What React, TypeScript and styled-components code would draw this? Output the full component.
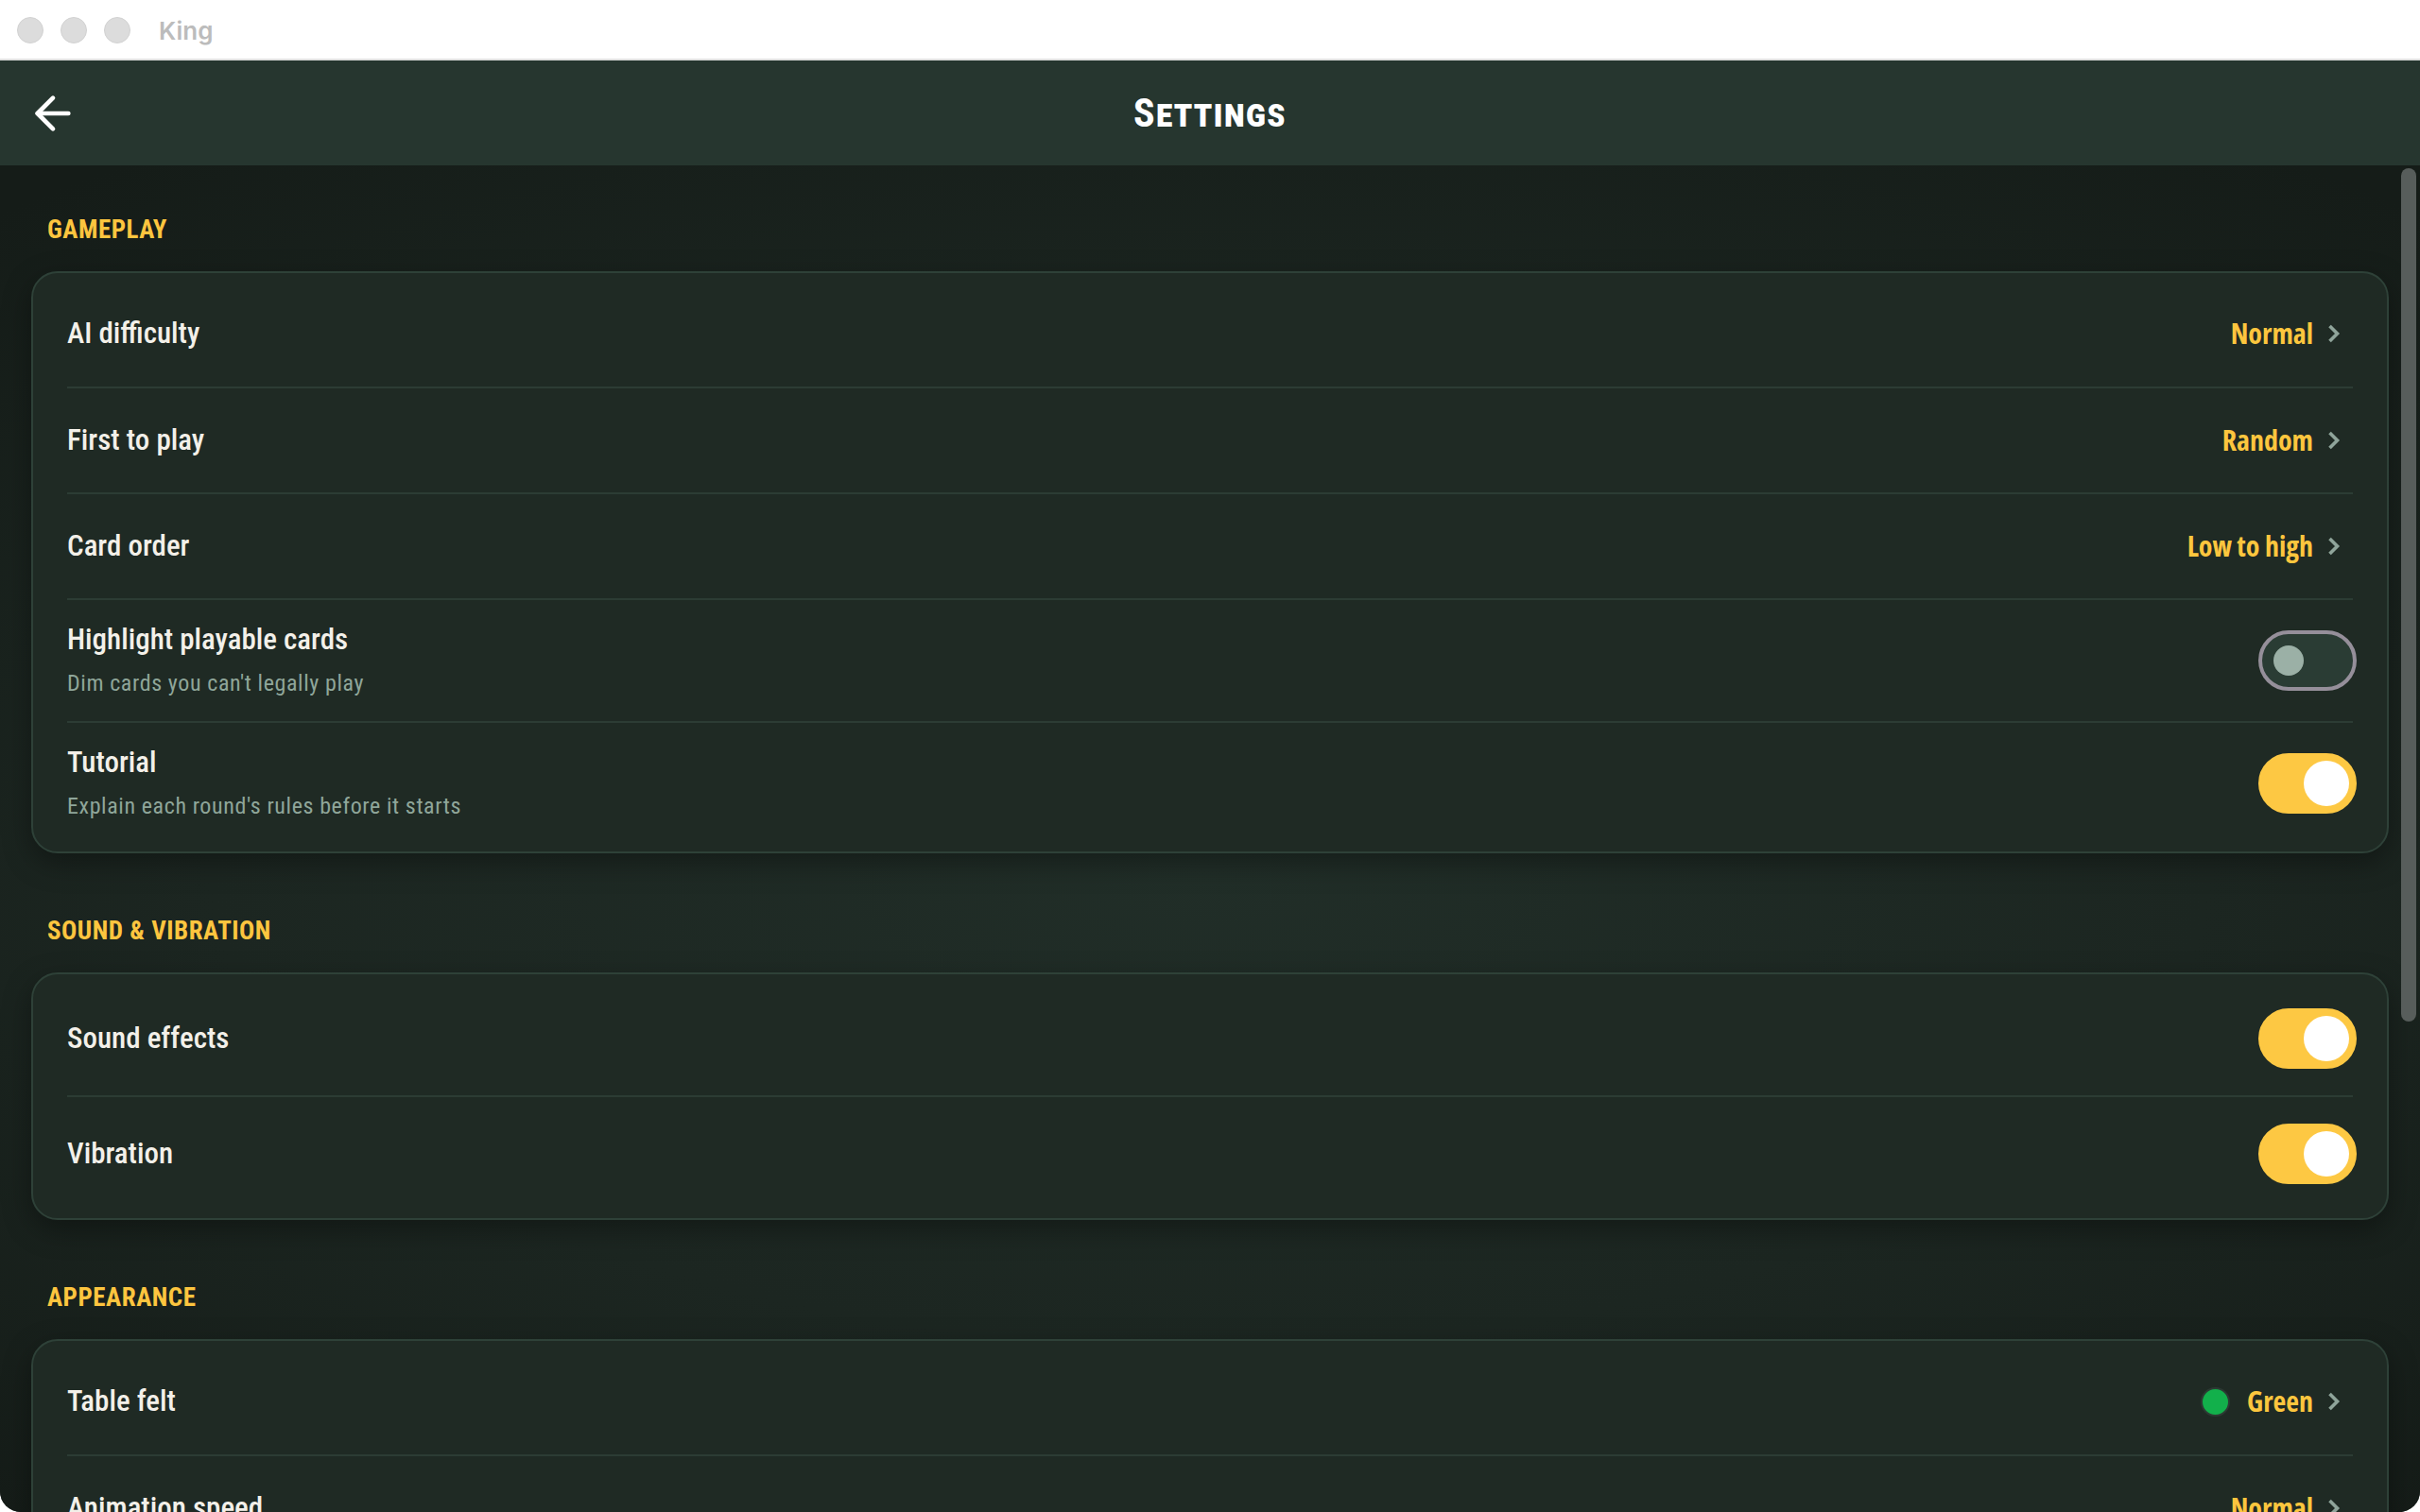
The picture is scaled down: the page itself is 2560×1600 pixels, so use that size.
import React, { useEffect, useRef, useState } from "react";
import styled, { createGlobalStyle } from "styled-components";

const FONT = `"Roboto Condensed", "DejaVu Sans Condensed", sans-serif`;
const VALUE_FONT = `"Open Sans", "Roboto Condensed", sans-serif`;

const GlobalStyle = createGlobalStyle`
  html, body {
    margin: 0;
    height: 100%;
    background: #ffffff;
  }
  #root {
    height: 100%;
  }
  * {
    box-sizing: border-box;
  }
`;

const Window = styled.div`
  height: 100vh;
  display: flex;
  flex-direction: column;
  overflow: hidden;
  border-radius: 0 0 22px 22px;
  background: #161d19;
`;

const TitleBar = styled.div`
  height: 64px;
  flex-shrink: 0;
  display: flex;
  align-items: center;
  gap: 18px;
  padding: 2px 0 0 18px;
  background: #ffffff;
  border-bottom: 2px solid #e0e0e0;
`;

const Light = styled.span`
  width: 28px;
  height: 28px;
  border-radius: 50%;
  background: #dcdcdc;
  border: 1px solid #d2d2d2;
`;

const WindowName = styled.span`
  margin-left: 12px;
  font: 600 26px "Inter", "Liberation Sans", sans-serif;
  color: #bcbcbc;
`;

const Header = styled.header`
  height: 111px;
  flex-shrink: 0;
  display: grid;
  grid-template-columns: 1fr auto 1fr;
  align-items: center;
  padding: 0 28px;
  background: #26362f;
`;

const BackButton = styled.button`
  width: 56px;
  height: 56px;
  padding: 0;
  border: none;
  background: none;
  color: #ffffff;
  display: flex;
  cursor: pointer;
`;

const Title = styled.h1`
  margin: 0;
  font: 700 42px ${FONT};
  font-variant: small-caps;
  letter-spacing: 1px;
  color: #ffffff;
`;

const ScrollFrame = styled.div`
  position: relative;
  flex: 1;
  min-height: 0;
`;

const Scroll = styled.main`
  height: 100%;
  overflow-y: auto;
  scrollbar-width: none;
  background: radial-gradient(
    ellipse 75% 65% at 50% 52%,
    #212e28 0%,
    #1c2621 55%,
    #151c18 100%
  );

  &::-webkit-scrollbar {
    display: none;
  }
`;

const Thumb = styled.div`
  position: absolute;
  right: 4px;
  width: 16px;
  border-radius: 8px;
  background: #575d5b;
  pointer-events: none;
`;

const Content = styled.div`
  padding: 52px 33px 160px 33px;
`;

const Section = styled.section`
  & + & {
    margin-top: 66px;
  }
`;

const SectionLabel = styled.h2`
  margin: 0 0 28px;
  padding-left: 17px;
  font: 700 27px/32px ${FONT};
  letter-spacing: 0.5px;
  color: #fdc53f;
`;

const Card = styled.div`
  background: #1f2a24;
  border: 2px solid #2e4138;
  border-radius: 28px;
  padding: 8px 36px;
  box-shadow: 0 10px 30px rgba(0, 0, 0, 0.35);
`;

const Row = styled.div`
  min-height: 112px;
  padding: 24px 0;
  display: flex;
  align-items: center;
  justify-content: space-between;
  gap: 24px;

  & + & {
    border-top: 2px solid #2c3c34;
  }
`;

const Texts = styled.div`
  display: flex;
  flex-direction: column;
  gap: 12px;
`;

const RowTitle = styled.div`
  font: 500 31px/36px ${FONT};
  color: #f3f0e9;
`;

const RowHint = styled.div`
  font: 400 24px/32px ${FONT};
  letter-spacing: 0.6px;
  color: #8fa69a;
`;

const ValueButton = styled.button`
  display: flex;
  align-items: center;
  gap: 15px;
  margin-right: 13px;
  padding: 0;
  border: none;
  background: none;
  cursor: pointer;
`;

const Value = styled.span`
  font: 700 30px/56px ${VALUE_FONT};
  font-stretch: 75%;
  color: #fcc63e;
`;

const FeltDot = styled.span<{ $color: string }>`
  width: 31px;
  height: 31px;
  margin-right: 3px;
  border-radius: 50%;
  background: ${(p) => p.$color};
  border: 2px solid #2c3a33;
`;

const Track = styled.button<{ $on: boolean }>`
  width: 104px;
  height: 64px;
  margin: 4px -4px 4px 0;
  flex-shrink: 0;
  display: flex;
  align-items: center;
  justify-content: ${(p) => (p.$on ? "flex-end" : "flex-start")};
  padding: 0 4px 0 12px;
  border-radius: 32px;
  border: 4px solid ${(p) => (p.$on ? "#fdc843" : "#958f9a")};
  background: ${(p) => (p.$on ? "#fdc843" : "#2a3c34")};
  cursor: pointer;
`;

const Knob = styled.span<{ $on: boolean }>`
  width: ${(p) => (p.$on ? 48 : 32)}px;
  height: ${(p) => (p.$on ? 48 : 32)}px;
  border-radius: 50%;
  background: ${(p) => (p.$on ? "#ffffff" : "#9bb0a6")};
`;

const Chevron = () => (
  <svg width="14" height="22" viewBox="0 0 14 22" fill="none">
    <path d="M2.5 3 L10.5 11 L2.5 19" stroke="#8fa49a" strokeWidth="3.6" />
  </svg>
);

const ArrowLeft = () => (
  <svg width="56" height="56" viewBox="0 0 24 24" fill="none" stroke="currentColor" strokeWidth="2" strokeLinecap="round" strokeLinejoin="round">
    <path d="m12 19-7-7 7-7" />
    <path d="M19 12H5" />
  </svg>
);

const Switch = ({ on, onToggle }: { on: boolean; onToggle: () => void }) => (
  <Track $on={on} onClick={onToggle} role="switch" aria-checked={on}>
    <Knob $on={on} />
  </Track>
);

const PickRow = ({ label, value, dot }: { label: string; value: string; dot?: string }) => (
  <Row>
    <RowTitle>{label}</RowTitle>
    <ValueButton>
      {dot && <FeltDot $color={dot} />}
      <Value>{value}</Value>
      <Chevron />
    </ValueButton>
  </Row>
);

const App: React.FC = () => {
  const [toggles, setToggles] = useState({
    highlight: false,
    tutorial: true,
    sound: true,
    vibration: true,
  });
  const scrollRef = useRef<HTMLElement>(null);
  const [thumb, setThumb] = useState({ top: 3, height: 0 });

  // the native bar is hidden, so the thumb follows the scroll position by hand
  const measure = () => {
    const el = scrollRef.current;
    if (!el) return;
    const track = el.clientHeight - 6;
    const height = (track * el.clientHeight) / el.scrollHeight;
    const top = 3 + (track - height) * (el.scrollTop / Math.max(1, el.scrollHeight - el.clientHeight));
    setThumb({ top, height });
  };

  useEffect(() => {
    measure();
    window.addEventListener("resize", measure);
    return () => window.removeEventListener("resize", measure);
  }, []);

  const flip = (key: keyof typeof toggles) =>
    setToggles((prev) => ({ ...prev, [key]: !prev[key] }));

  return (
    <>
      <GlobalStyle />
      <Window>
        <TitleBar>
          <Light />
          <Light />
          <Light />
          <WindowName>King</WindowName>
        </TitleBar>

        <Header>
          <BackButton aria-label="Back">
            <ArrowLeft />
          </BackButton>
          <Title>Settings</Title>
          <span />
        </Header>

        <ScrollFrame>
          <Scroll ref={scrollRef} onScroll={measure}>
            <Content>
              <Section>
                <SectionLabel>GAMEPLAY</SectionLabel>
                <Card>
                  <PickRow label="AI difficulty" value="Normal" />
                  <PickRow label="First to play" value="Random" />
                  <PickRow label="Card order" value="Low to high" />
                  <Row>
                    <Texts>
                      <RowTitle>Highlight playable cards</RowTitle>
                      <RowHint>Dim cards you can't legally play</RowHint>
                    </Texts>
                    <Switch on={toggles.highlight} onToggle={() => flip("highlight")} />
                  </Row>
                  <Row>
                    <Texts>
                      <RowTitle>Tutorial</RowTitle>
                      <RowHint>Explain each round's rules before it starts</RowHint>
                    </Texts>
                    <Switch on={toggles.tutorial} onToggle={() => flip("tutorial")} />
                  </Row>
                </Card>
              </Section>

              <Section>
                <SectionLabel>SOUND &amp; VIBRATION</SectionLabel>
                <Card>
                  <Row>
                    <RowTitle>Sound effects</RowTitle>
                    <Switch on={toggles.sound} onToggle={() => flip("sound")} />
                  </Row>
                  <Row>
                    <RowTitle>Vibration</RowTitle>
                    <Switch on={toggles.vibration} onToggle={() => flip("vibration")} />
                  </Row>
                </Card>
              </Section>

              <Section>
                <SectionLabel>APPEARANCE</SectionLabel>
                <Card>
                  <PickRow label="Table felt" value="Green" dot="#12b04b" />
                  <PickRow label="Animation speed" value="Normal" />
                  <PickRow label="Card back" value="Classic" />
                </Card>
              </Section>

              <Section>
                <SectionLabel>ABOUT</SectionLabel>
                <Card>
                  <PickRow label="How to play" value="Rules" />
                  <PickRow label="Credits" value="View" />
                  <PickRow label="Version" value="1.0.0" />
                </Card>
              </Section>
            </Content>
          </Scroll>
          {thumb.height > 0 && <Thumb style={{ top: thumb.top, height: thumb.height }} />}
        </ScrollFrame>
      </Window>
    </>
  );
};

export default App;
